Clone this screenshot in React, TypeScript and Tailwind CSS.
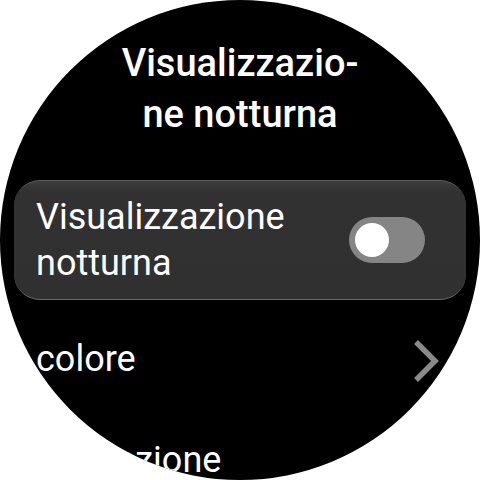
import { useState } from "react";

function Toggle({ on, onChange }: { on: boolean; onChange: (v: boolean) => void }) {
  return (
    <button
      type="button"
      role="switch"
      aria-checked={on}
      onClick={() => onChange(!on)}
      className="flex h-[46px] w-[76px] shrink-0 items-center rounded-full bg-[#858585] px-[6px]"
    >
      <span className="size-[34px] rounded-full bg-white" />
    </button>
  );
}

function Chevron() {
  return (
    <svg width="26" height="44" viewBox="0 0 26 44" className="mt-[3px] shrink-0" aria-hidden>
      <path d="M3 3 L22 22 L3 41" fill="none" stroke="#8a8a8a" strokeWidth="5.5" strokeLinejoin="miter" />
    </svg>
  );
}

export default function App() {
  const [night, setNight] = useState(false);

  return (
    <div className="flex h-[480px] w-[480px] bg-white">
      <div className="flex h-[480px] w-[480px] flex-col overflow-hidden rounded-full bg-black font-['Roboto',sans-serif] text-white">
        <h1 className="mt-[38px] text-center text-[38px] font-medium leading-[51px]">
          Visualizzazio-
          <br />
          ne notturna
        </h1>

        <div className="mx-[14px] mt-[40px] flex h-[120px] shrink-0 items-center justify-between rounded-[26px] border-y border-t-[#5c5c5c] border-b-[#6a6a6a] bg-[linear-gradient(to_bottom,#3c3c3c,#313131_10%,#303030)] pl-[22px] pr-[41px]">
          <span className="text-[36px] leading-[46px]">
            Visualizzazione
            <br />
            notturna
          </span>
          <Toggle on={night} onChange={setNight} />
        </div>

        <div className="mx-[14px] mt-[36px] flex items-start justify-between pl-[22px] pr-[27px]">
          <span className="text-[36px] leading-[46px]">colore</span>
          <Chevron />
        </div>

        <div className="mx-[14px] mt-[54px] flex pl-[29px]">
          <span className="text-[36px] leading-[46px]">Attivazione</span>
        </div>
      </div>
    </div>
  );
}
